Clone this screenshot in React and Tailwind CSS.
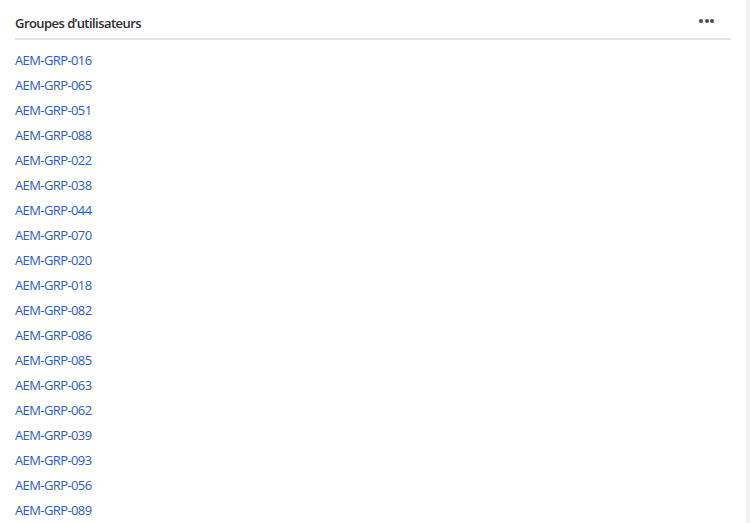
import React from "react";

const ids = ["016","065","051","088","022","038","044","070","020","018","082","086","085","063","062","039","093","056","089"];

export default function App() {
  return (
    <div className="flex h-[523px] w-[750px] overflow-hidden bg-white" style={{ fontFamily: '"Open Sans", "Noto Sans", sans-serif' }}>
      <div className="flex-1 pl-[15px] pr-[15px]">
        <div className="flex h-[40px] items-center justify-between border-b-2 border-[#e3e3e3] pt-[10px]">
          <span className="text-[13px] font-semibold tracking-[-0.55px] text-[#2c2c2c]">Groupes d’utilisateurs</span>
          <span className="flex gap-[1.5px] pr-[17px] pb-[6px]">
            <span className="h-[4px] w-[4px] rounded-full bg-[#4a4a4a]" />
            <span className="h-[4px] w-[4px] rounded-full bg-[#4a4a4a]" />
            <span className="h-[4px] w-[4px] rounded-full bg-[#4a4a4a]" />
          </span>
        </div>
        <ul className="pt-[8px]">
          {ids.map((id) => (
            <li key={id} className="flex h-[25px] items-center text-[13px] tracking-[-0.6px] text-[#2b5cc0]">
              AEM-GRP-{id}
            </li>
          ))}
        </ul>
      </div>
      <div className="w-[4px] bg-[#f2f2f2]" />
    </div>
  );
}
